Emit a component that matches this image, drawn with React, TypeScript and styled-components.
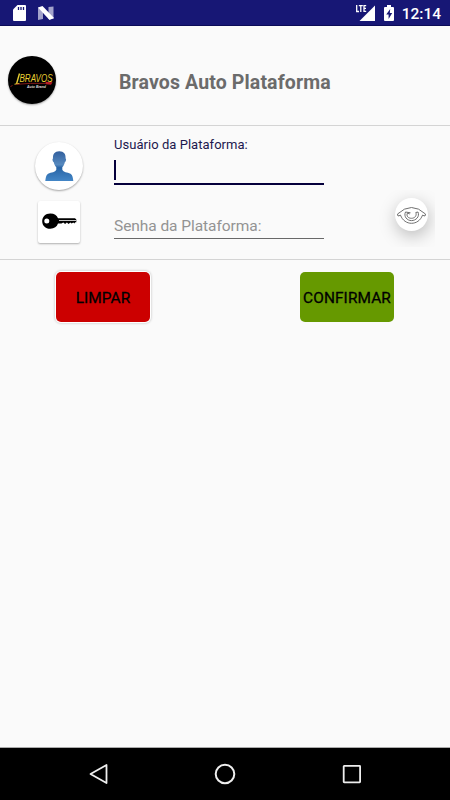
import React from "react";
import styled, { createGlobalStyle } from "styled-components";

const GlobalStyle = createGlobalStyle`
  * { box-sizing: border-box; }
  body { margin: 0; background: #fafafa; font-family: Roboto, "Liberation Sans", sans-serif; }
`;

const Screen = styled.div`
  display: flex;
  flex-direction: column;
  width: 450px;
  height: 800px;
  overflow: hidden;
  background: #fafafa;
`;

const StatusBar = styled.header`
  display: flex;
  align-items: flex-start;
  height: 26px;
  flex: none;
  padding: 0 9px 0 12px;
  background: #171775;
  border-bottom: 1px solid #0b0b58;
  color: #fff;
`;

const StatusIcons = styled.svg<{ $push?: boolean }>`
  display: block;
  flex: none;
  margin-left: ${(p) => (p.$push ? "auto" : "0")};
`;

const Clock = styled.time`
  margin-left: 5px;
  font-size: 15.5px;
  font-weight: 500;
  line-height: 28px;
`;

const Header = styled.section`
  display: flex;
  align-items: center;
  height: 100px;
  flex: none;
  padding: 9px 0 0 8px;
  border-bottom: 1px solid #d4d4d4;
`;

const Disc = styled.div<{ $size: number; $color: string }>`
  display: flex;
  flex: none;
  width: ${(p) => p.$size}px;
  height: ${(p) => p.$size}px;
  border-radius: 50%;
  background: ${(p) => p.$color};
  box-shadow: 0 1px 2px rgba(0, 0, 0, 0.35);
`;

const Title = styled.h1`
  margin: 5px 0 0 63px;
  font-size: 19.5px;
  font-weight: 700;
  line-height: 24px;
  letter-spacing: 0.13px;
  color: #6b6b6b;
  white-space: nowrap;
`;

const Form = styled.form`
  display: grid;
  grid-template-columns: 48px 210px 80px;
  column-gap: 31px;
  height: 134px;
  flex: none;
  padding-left: 35px;
  border-bottom: 1px solid #d4d4d4;
`;

const IconColumn = styled.div`
  display: flex;
  flex-direction: column;
  align-items: center;
  gap: 11px;
  padding-top: 16px;
`;

const KeyTile = styled.div`
  width: 42px;
  height: 42px;
  border-radius: 2px;
  background: #fff;
  box-shadow: 0 1px 2px rgba(0, 0, 0, 0.3);
`;

const Fields = styled.div`
  display: flex;
  flex-direction: column;
`;

const Label = styled.label`
  height: 16px;
  margin-top: 11px;
  font-size: 13px;
  line-height: 16px;
  letter-spacing: 0.04px;
  color: #1c184e;
  white-space: nowrap;
`;

const ActiveField = styled.div`
  height: 32px;
  padding-top: 7px;
  border-bottom: 2px solid #05003c;
`;

const Caret = styled.div`
  width: 2px;
  height: 20px;
  background: #05003c;
`;

const EmptyField = styled.div`
  height: 54px;
  padding-top: 31px;
  border-bottom: 1px solid #686868;
  font-size: 15.5px;
  line-height: 20px;
  letter-spacing: -0.06px;
  color: #939393;
  white-space: nowrap;
`;

const EyeArea = styled.div`
  width: 60px;
  height: 57px;
  margin: 64px 0 0 20px;
  padding: 8px 0 0 20px;
  overflow: hidden;
`;

const EyeDisc = styled(Disc)`
  box-shadow: 1px 5px 17px rgba(0, 0, 0, 0.26);
`;

const Actions = styled.main`
  display: flex;
  justify-content: space-between;
  align-items: flex-start;
  flex: 1;
  padding: 12px 56px 0;
`;

const ActionButton = styled.button<{ $color: string; $raised?: boolean }>`
  width: 94px;
  height: 50px;
  padding: 0;
  border: 0;
  border-radius: 5px;
  background: ${(p) => p.$color};
  box-shadow: ${(p) =>
    p.$raised ? "0 0 0 1px #fff, 0 0 2px 2px rgba(0,0,0,.12)" : "none"};
  color: #000;
  font: 400 15.4px/52px Roboto, sans-serif;
  letter-spacing: 0.1px;
  -webkit-text-stroke: 0.3px #000;
  text-align: center;
  white-space: nowrap;
`;

const NavBar = styled.nav`
  display: flex;
  justify-content: space-between;
  align-items: center;
  height: 53px;
  flex: none;
  padding: 0 87px 0 87px;
  background: #000;
  border-top: 1px solid #aaa;
`;

const Glyph = styled.svg`
  display: block;
  flex: none;
  overflow: visible;
`;

const LogoWord = styled.text`
  font: italic 400 11px "Liberation Sans", sans-serif;
  fill: #e8cf32;
`;

const LogoSub = styled.text`
  font: italic 700 4px "Liberation Sans", sans-serif;
  fill: #ddd;
`;

export default function App() {
  return (
    <>
      <GlobalStyle />
      <Screen>
        <StatusBar>
          <StatusIcons width="44" height="25">
            <path d="M5.5 5H13q1 0 1 1v14q0 1-1 1H2q-1 0-1-1V9.5Z" fill="#fff" />
            <path d="M6.5 7v3M9 7v3M11.5 7v3" stroke="#171775" strokeWidth="1.3" />
            <path d="M26 7.5h5V19l-5 1ZM36.5 7l5-.5V19h-5Z" fill="#a3a3cb" />
            <path d="M26 7.5 30.5 6 42 18l-4.5 2Z" fill="#fff" />
          </StatusIcons>
          <StatusIcons $push width="41" height="25">
            <path d="M19 5.5V21H3.5Z" fill="#fff" />
            <path d="M0 4h10.8v9H0Z" fill="#171775" />
            <path
              d="M.7 5v6.5H3M2.8 5.7h4M4.8 5.7V12M10.2 5.7H8v5.6h2.2M8 8.4h2"
              fill="none"
              stroke="#fff"
              strokeWidth="1.3"
            />
            <path d="M31 5h4v2h2q1 0 1 1v12q0 1-1 1h-8q-1 0-1-1V8q0-1 1-1h2Z" fill="#fff" />
            <path d="M34.2 9 30.2 14.5h2.4V19l3.6-6h-2.4Z" fill="#171775" />
          </StatusIcons>
          <Clock>12:14</Clock>
        </StatusBar>

        <Header>
          <Disc $size={48} $color="#000">
            <Glyph width="48" height="48" viewBox="0 0 48 48">
              <path d="M11.5 17.5 8.5 28" stroke="#e8cf32" strokeWidth="1.4" />
              <path d="M6.5 28.2l5-.8" fill="none" stroke="#e8cf32" />
              <LogoWord x="11.5" y="25.8" textLength="33" lengthAdjust="spacingAndGlyphs">
                BRAVOS
              </LogoWord>
              <path d="M2.5 30.5l2-1M8 28.4q14-1.6 30-1" fill="none" stroke="#8f1d1d" strokeWidth=".9" />
              <path d="M37.5 25.8l7 .4-1.5 2.6-5-.6Z" fill="#b81c25" />
              <LogoSub x="19" y="31.5" textLength="19" lengthAdjust="spacingAndGlyphs">
                Auto Brand
              </LogoSub>
            </Glyph>
          </Disc>
          <Title>Bravos Auto Plataforma</Title>
        </Header>

        <Form>
          <IconColumn>
            <Disc $size={48} $color="#fff">
              <Glyph width="48" height="48" viewBox="0 0 48 48">
                <defs>
                  <linearGradient id="person" x1="0" y1="0" x2="0" y2="1">
                    <stop offset="0" stopColor="#315f9d" />
                    <stop offset=".45" stopColor="#578abf" />
                    <stop offset=".55" stopColor="#2864a6" />
                    <stop offset="1" stopColor="#4386c6" />
                  </linearGradient>
                </defs>
                <path
                  d="M24.3 9.3c-4.6 0-6.7 3-6.3 7.2-1 .3-.3 3.3.8 3.8.4 2.3 1.2 3.7 2.5 4.9v2.5c-1 2.5-5 2.5-8.2 4-2.2 1.1-2.4 4.2-2.8 7.3h28c-.4-3.1-.6-6.2-2.8-7.3-3.2-1.5-7.2-1.5-8.2-4v-2.5c1.3-1.2 2.1-2.6 2.5-4.9 1.1-.5 1.8-3.5.8-3.8.4-4.2-1.7-7.2-6.3-7.2Z"
                  fill="url(#person)"
                />
              </Glyph>
            </Disc>
            <KeyTile>
              <Glyph width="42" height="42" viewBox="0 0 42 42">
                <path
                  fillRule="evenodd"
                  d="M12.3 12.5c4 0 6.6 2 7.7 4.8h17l1.3 1.3v2.6h-1l-1 1.2-1-1-1.6 1.2-1.4-1.1-1.7 1.4-1.7-1.4-1.8 1.4-1.8-1.3-1.8 1H20c-1.1 3.2-3.7 5.2-7.7 5.2-5 0-8.1-3.4-8.1-7.6s3.1-7.7 8.1-7.7ZM8.8 17.6a2.5 2.5 0 1 0 0 5 2.5 2.5 0 0 0 0-5Z"
                />
                <path d="M21 19.5h17" stroke="#ddd" strokeWidth=".9" />
              </Glyph>
            </KeyTile>
          </IconColumn>
          <Fields>
            <Label>Usuário da Plataforma:</Label>
            <ActiveField>
              <Caret />
            </ActiveField>
            <EmptyField>Senha da Plataforma:</EmptyField>
          </Fields>
          <EyeArea>
            <EyeDisc $size={33} $color="#fff">
              <Glyph width="33" height="33" viewBox="0 0 33 33" fill="none" stroke="#707070">
                <path d="M2.5 16Q16.5 3 30.5 16L30 18l-2.8-.8M2.5 16l.5 2 2.8-.8" />
                <path d="M5.5 17.2C9.5 28 23.5 28 27.5 17.2" />
                <path d="M15.5 14.8 10.5 14c-2 4.5 1.5 8.6 6 8.6s8.4-4 6.5-8.6l-2.2.5c1.2 3-.9 5.8-4.3 5.8s-5.5-2.4-4-5.3l2.3 1" />
              </Glyph>
            </EyeDisc>
          </EyeArea>
        </Form>

        <Actions>
          <ActionButton type="button" $color="#cc0000" $raised>
            LIMPAR
          </ActionButton>
          <ActionButton type="button" $color="#669900">
            CONFIRMAR
          </ActionButton>
        </Actions>

        <NavBar>
          <Glyph width="22" height="22" fill="none" stroke="#eee" strokeWidth="1.8">
            <path d="M19.5 2v18L3.5 11Z" strokeLinejoin="round" />
          </Glyph>
          <Glyph width="22" height="22" fill="none" stroke="#eee" strokeWidth="2">
            <circle cx="11" cy="11" r="9.3" />
          </Glyph>
          <Glyph width="22" height="22" fill="none" stroke="#eee" strokeWidth="1.8">
            <rect x="2.7" y="2.9" width="16.4" height="16.4" rx=".5" />
          </Glyph>
        </NavBar>
      </Screen>
    </>
  );
}
